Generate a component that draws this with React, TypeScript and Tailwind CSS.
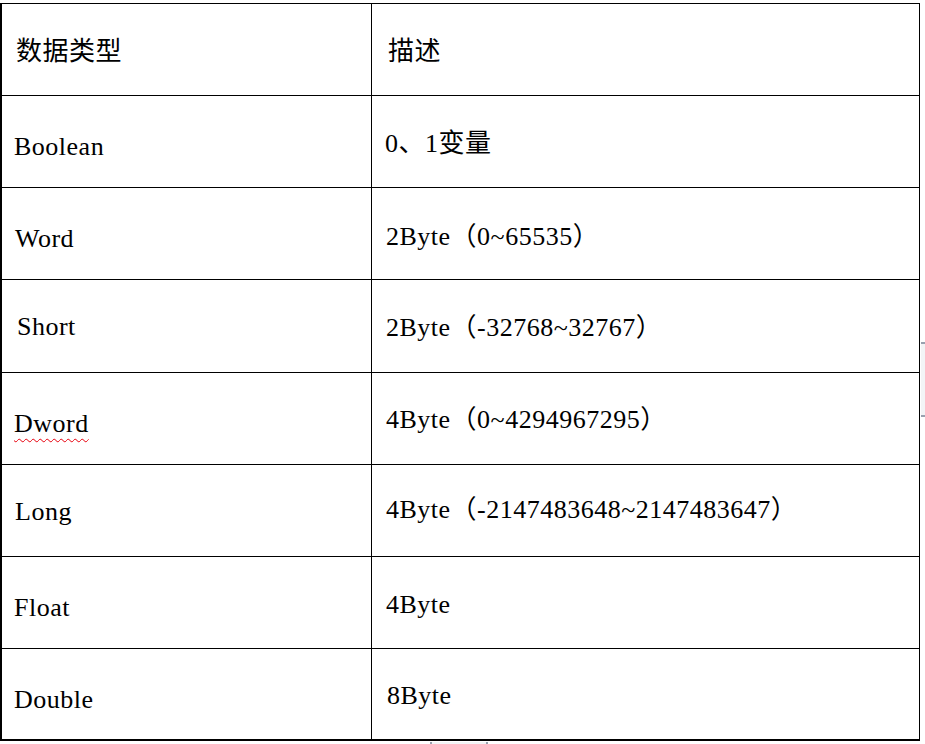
import React from 'react';

type Row = {
  name: string;
  desc: string;
  h: string;
  namePad: string;
  descPad: string;
  nameX: string;
  descX: string;
  misspelled?: boolean;
};

const rows: Row[] = [
  {name: '数据类型', desc: '描述', h: 'h-[92px]', namePad: 'pt-[35px]', descPad: 'pt-[35px]', nameX: 'pl-[14px]', descX: 'pl-[16px]'},
  {name: 'Boolean', desc: '0、1变量', h: 'h-[92px]', namePad: 'pt-[38px]', descPad: 'pt-[35px]', nameX: 'pl-[12px]', descX: 'pl-[13px]'},
  {name: 'Word', desc: '2Byte（0~65535）', h: 'h-[92px]', namePad: 'pt-[38px]', descPad: 'pt-[36px]', nameX: 'pl-[13px]', descX: 'pl-[14px]'},
  {name: 'Short', desc: '2Byte（-32768~32767）', h: 'h-[93px]', namePad: 'pt-[34px]', descPad: 'pt-[35px]', nameX: 'pl-[15px]', descX: 'pl-[14px]'},
  {name: 'Dword', desc: '4Byte（0~4294967295）', h: 'h-[92px]', namePad: 'pt-[38px]', descPad: 'pt-[34px]', nameX: 'pl-[12px]', descX: 'pl-[14px]', misspelled: true},
  {name: 'Long', desc: '4Byte（-2147483648~2147483647）', h: 'h-[92px]', namePad: 'pt-[34px]', descPad: 'pt-[32px]', nameX: 'pl-[13px]', descX: 'pl-[14px]'},
  {name: 'Float', desc: '4Byte', h: 'h-[92px]', namePad: 'pt-[38px]', descPad: 'pt-[35px]', nameX: 'pl-[12px]', descX: 'pl-[14px]'},
  {name: 'Double', desc: '8Byte', h: 'h-[90px]', namePad: 'pt-[38px]', descPad: 'pt-[34px]', nameX: 'pl-[12px]', descX: 'pl-[15px]'},
];

export default function App() {
  return (
    <div className="relative h-[744px] w-[925px] overflow-hidden bg-white pt-[3px] font-['Liberation_Serif','Noto_Sans_CJK_SC',serif] text-[26px] leading-[26px] tracking-[0.5px] text-black">
      <div className="w-[920px] border-t border-r border-b-2 border-l-2 border-black">
        {rows.map((row, i) => (
          <div
            key={row.name}
            className={`grid grid-cols-[370px_1fr] ${row.h} ${i < rows.length - 1 ? 'border-b border-black' : ''}`}
          >
            <div className={`border-r border-black ${row.namePad} ${row.nameX}`}>
              {row.misspelled ? (
                <span className="underline decoration-red-600 decoration-wavy decoration-1 underline-offset-[6px]">
                  {row.name}
                </span>
              ) : (
                row.name
              )}
            </div>
            <div className={`${row.descPad} ${row.descX} whitespace-nowrap`}>{row.desc}</div>
          </div>
        ))}
      </div>
      {/* scrollbar stubs of the editor window */}
      <div className="absolute top-[342px] left-[921px] h-[75px] w-[4px] border-y-2 border-gray-400 bg-gray-100" />
      <div className="absolute top-[742px] left-[430px] h-[2px] w-[58px] border-x-2 border-gray-400 bg-gray-100" />
    </div>
  );
}
